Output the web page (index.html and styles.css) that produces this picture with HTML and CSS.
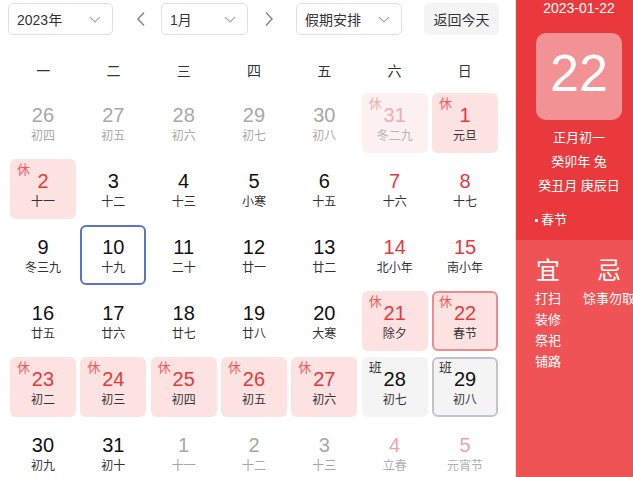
FILE: index.html
```html
<!DOCTYPE html>
<html lang="zh-CN">
<head>
<meta charset="utf-8">
<title>万年历</title>
<link rel="stylesheet" href="styles.css">
</head>
<body>
<div class="app">
  <div class="main">
    <div class="toolbar">
      <div class="select sel-year"><span>2023年</span><svg class="chev" viewBox="0 0 12 7" width="12" height="7"><path d="M1 1 L6 6 L11 1" fill="none" stroke="#a8abb2" stroke-width="1.2"/></svg></div>
      <div class="arrow arrow-prev"><svg viewBox="0 0 10 16" width="10" height="16"><path d="M8 1.5 L2 8 L8 14.5" fill="none" stroke="#888" stroke-width="1.5"/></svg></div>
      <div class="select sel-month"><span>1月</span><svg class="chev" viewBox="0 0 12 7" width="12" height="7"><path d="M1 1 L6 6 L11 1" fill="none" stroke="#a8abb2" stroke-width="1.2"/></svg></div>
      <div class="arrow arrow-next"><svg viewBox="0 0 10 16" width="10" height="16"><path d="M2 1.5 L8 8 L2 14.5" fill="none" stroke="#888" stroke-width="1.5"/></svg></div>
      <div class="select sel-holiday"><span>假期安排</span><svg class="chev" viewBox="0 0 12 7" width="12" height="7"><path d="M1 1 L6 6 L11 1" fill="none" stroke="#a8abb2" stroke-width="1.2"/></svg></div>
      <div class="btn-today">返回今天</div>
    </div>
    <div class="weekdays">
      <div>一</div><div>二</div><div>三</div><div>四</div><div>五</div><div>六</div><div>日</div>
    </div>
    <div class="grid">
      <div class="cell other"><div class="num">26</div><div class="lunar">初四</div></div>
      <div class="cell other"><div class="num">27</div><div class="lunar">初五</div></div>
      <div class="cell other"><div class="num">28</div><div class="lunar">初六</div></div>
      <div class="cell other"><div class="num">29</div><div class="lunar">初七</div></div>
      <div class="cell other"><div class="num">30</div><div class="lunar">初八</div></div>
      <div class="cell other rest faded"><span class="tag">休</span><div class="num">31</div><div class="lunar">冬二九</div></div>
      <div class="cell rest"><span class="tag">休</span><div class="num">1</div><div class="lunar">元旦</div></div>

      <div class="cell rest"><span class="tag">休</span><div class="num">2</div><div class="lunar">十一</div></div>
      <div class="cell"><div class="num">3</div><div class="lunar">十二</div></div>
      <div class="cell"><div class="num">4</div><div class="lunar">十三</div></div>
      <div class="cell"><div class="num">5</div><div class="lunar">小寒</div></div>
      <div class="cell"><div class="num">6</div><div class="lunar">十五</div></div>
      <div class="cell weekend"><div class="num">7</div><div class="lunar">十六</div></div>
      <div class="cell weekend"><div class="num">8</div><div class="lunar">十七</div></div>

      <div class="cell"><div class="num">9</div><div class="lunar">冬三九</div></div>
      <div class="cell today"><div class="num">10</div><div class="lunar">十九</div></div>
      <div class="cell"><div class="num">11</div><div class="lunar">二十</div></div>
      <div class="cell"><div class="num">12</div><div class="lunar">廿一</div></div>
      <div class="cell"><div class="num">13</div><div class="lunar">廿二</div></div>
      <div class="cell weekend"><div class="num">14</div><div class="lunar">北小年</div></div>
      <div class="cell weekend"><div class="num">15</div><div class="lunar">南小年</div></div>

      <div class="cell"><div class="num">16</div><div class="lunar">廿五</div></div>
      <div class="cell"><div class="num">17</div><div class="lunar">廿六</div></div>
      <div class="cell"><div class="num">18</div><div class="lunar">廿七</div></div>
      <div class="cell"><div class="num">19</div><div class="lunar">廿八</div></div>
      <div class="cell"><div class="num">20</div><div class="lunar">大寒</div></div>
      <div class="cell rest"><span class="tag">休</span><div class="num">21</div><div class="lunar">除夕</div></div>
      <div class="cell rest selected"><span class="tag">休</span><div class="num">22</div><div class="lunar">春节</div></div>

      <div class="cell rest"><span class="tag">休</span><div class="num">23</div><div class="lunar">初二</div></div>
      <div class="cell rest"><span class="tag">休</span><div class="num">24</div><div class="lunar">初三</div></div>
      <div class="cell rest"><span class="tag">休</span><div class="num">25</div><div class="lunar">初四</div></div>
      <div class="cell rest"><span class="tag">休</span><div class="num">26</div><div class="lunar">初五</div></div>
      <div class="cell rest"><span class="tag">休</span><div class="num">27</div><div class="lunar">初六</div></div>
      <div class="cell work"><span class="tag">班</span><div class="num">28</div><div class="lunar">初七</div></div>
      <div class="cell work work-sel"><span class="tag">班</span><div class="num">29</div><div class="lunar">初八</div></div>

      <div class="cell"><div class="num">30</div><div class="lunar">初九</div></div>
      <div class="cell"><div class="num">31</div><div class="lunar">初十</div></div>
      <div class="cell other"><div class="num">1</div><div class="lunar">十一</div></div>
      <div class="cell other"><div class="num">2</div><div class="lunar">十二</div></div>
      <div class="cell other"><div class="num">3</div><div class="lunar">十三</div></div>
      <div class="cell other weekend-other"><div class="num">4</div><div class="lunar">立春</div></div>
      <div class="cell other weekend-other"><div class="num">5</div><div class="lunar">元宵节</div></div>
    </div>
  </div>
  <div class="side">
    <div class="side-top">
      <div class="side-date">2023-01-22</div>
      <div class="big-day">22</div>
      <div class="side-line first">正月初一</div>
      <div class="side-line">癸卯年 兔</div>
      <div class="side-line">癸丑月 庚辰日</div>
      <div class="festival"><span class="dot"></span>春节</div>
    </div>
    <div class="side-bottom">
      <div class="col">
        <div class="col-title">宜</div>
        <div class="col-item">打扫</div>
        <div class="col-item">装修</div>
        <div class="col-item">祭祀</div>
        <div class="col-item">铺路</div>
      </div>
      <div class="col">
        <div class="col-title">忌</div>
        <div class="col-item">馀事勿取</div>
      </div>
    </div>
  </div>
</div>
</body>
</html>
```

FILE: styles.css
```css
* { box-sizing: border-box; }
html, body {
  margin: 0;
  padding: 0;
  background: #fff;
  overflow: hidden;
}
body {
  font-family: "Liberation Sans", "Noto Sans CJK SC", sans-serif;
  color: #333;
  width: 633px;
  height: 477px;
}
.app {
  display: flex;
  width: 660px;
  height: 477px;
}
.main {
  width: 516px;
  flex: none;
  padding: 3px 15px 0 8px;
  border-right: 1px solid #e4e4e4;
}
.toolbar {
  display: flex;
  align-items: center;
  height: 32px;
}
.select {
  height: 32px;
  border: 1px solid #dcdfe6;
  border-radius: 5px;
  display: flex;
  align-items: center;
  justify-content: space-between;
  padding: 0 11px 0 8px;
  font-size: 14px;
  color: #333;
}
.sel-year { width: 105px; }
.sel-month { width: 87px; }
.sel-holiday { width: 106px; }
.chev { display: block; }
.arrow {
  width: 16px;
  height: 32px;
  display: flex;
  align-items: center;
  justify-content: center;
}
.arrow-prev { margin: 0 12px 0 20px; }
.arrow-next { margin: 0 19px 0 13px; }
.btn-today {
  margin-left: 22px;
  width: 75px;
  height: 32px;
  border-radius: 5px;
  background: #f4f4f5;
  font-size: 14px;
  display: flex;
  align-items: center;
  justify-content: center;
  color: #333;
}
.weekdays {
  margin-top: 15px;
  height: 40px;
  display: grid;
  grid-template-columns: repeat(7, 1fr);
  align-items: center;
  text-align: center;
  font-size: 14px;
  color: #333;
}
.grid {
  display: grid;
  grid-template-columns: repeat(7, 1fr);
  grid-auto-rows: 60px;
  gap: 6px 4.4px;
  padding: 3px 2px;
}
.cell {
  position: relative;
  border-radius: 6px;
  display: flex;
  flex-direction: column;
  align-items: center;
  justify-content: flex-start;
  padding-top: 10px;
}
.today, .selected, .work-sel { padding-top: 8px; }
.num {
  font-size: 20px;
  line-height: 24px;
  color: #111;
}
.lunar {
  margin-top: 1px;
  font-size: 12px;
  line-height: 16px;
  color: #333;
}
.tag {
  position: absolute;
  left: 7px;
  top: 3px;
  font-size: 13px;
  line-height: 16px;
  color: #f0595b;
}
.today .tag, .selected .tag, .work-sel .tag { left: 5px; top: 1px; }
.other .num, .other .lunar { color: #a8a8a8; }
.weekend .num { color: #e8383b; }
.rest { background: #fde2e2; }
.rest .num { color: #e8383b; }
.rest.faded { background: #fdf0f0; }
.rest.faded .num, .rest.faded .tag { color: #f3acae; }
.rest.faded .lunar { color: #b5b5b5; }
.weekend-other .num { color: #f3a4a6; }
.weekend-other .lunar { color: #b0b0b0; }
.today { border: 2px solid #5a74c9; }
.selected { border: 2px solid #ec8c8e; }
.work { background: #f4f4f5; }
.work .tag { color: #333; }
.work-sel { border: 2px solid #c0c4cc; }

.side {
  width: 126px;
  flex: none;
  color: #fff;
  display: flex;
  flex-direction: column;
}
.side-top {
  height: 240px;
  background: #ea393c;
  display: flex;
  flex-direction: column;
  align-items: center;
}
.side-date {
  font-size: 14px;
  line-height: 16px;
}
.big-day {
  margin-top: 17px;
  width: 86px;
  height: 87px;
  border-radius: 10px;
  background: rgba(255, 255, 255, 0.45);
  font-size: 52px;
  line-height: 80px;
  text-align: center;
  color: #fff;
}
.side-line {
  font-size: 13px;
  line-height: 24px;
  text-align: center;
}
.side-line.first { margin-top: 6px; }
.festival {
  align-self: flex-start;
  margin-left: 19px;
  margin-top: 13px;
  font-size: 13px;
  line-height: 18px;
  display: flex;
  align-items: center;
}
.dot {
  width: 3px;
  height: 3px;
  background: #fff;
  margin-right: 3px;
}
.side-bottom {
  flex: 1;
  background: #ef5355;
  display: flex;
  align-items: flex-start;
  padding: 16px 0 0 19px;
  gap: 22px;
}
.col {
  display: flex;
  flex-direction: column;
  align-items: center;
}
.col-title {
  font-size: 24px;
  line-height: 30px;
  margin-bottom: 2px;
}
.col-item {
  font-size: 13px;
  line-height: 21px;
  white-space: nowrap;
}
```
